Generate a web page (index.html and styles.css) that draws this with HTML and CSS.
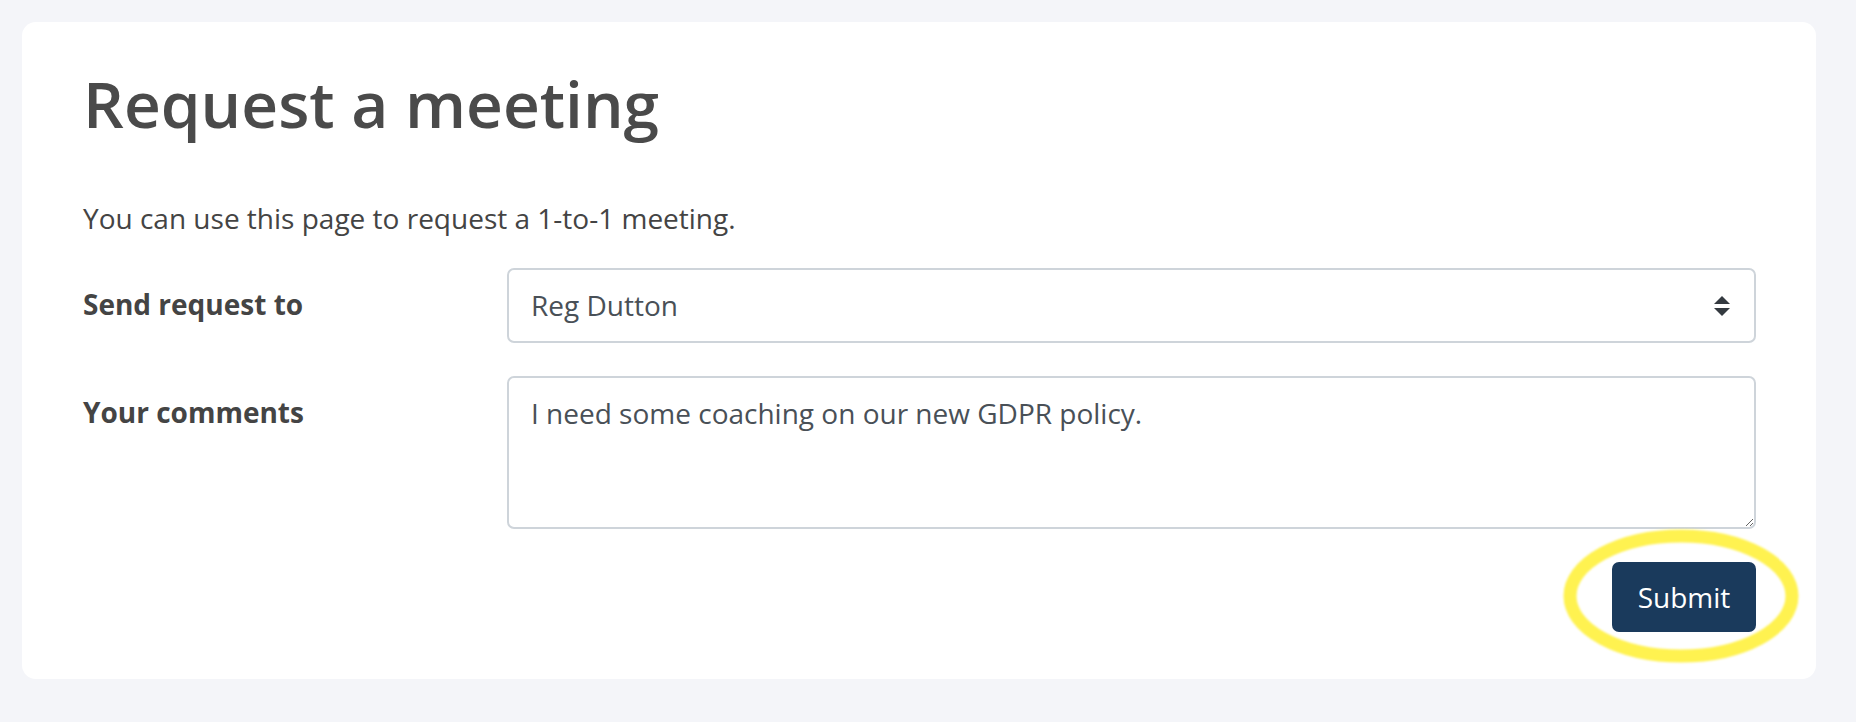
FILE: index.html
```html
<!DOCTYPE html>
<html lang="en">
<head>
  <meta charset="UTF-8">
  <meta name="viewport" content="width=device-width, initial-scale=1.0">
  <title>Request a meeting</title>
  <link rel="stylesheet" href="styles.css">
</head>
<body>
  <div class="card">
    <h1>Request a meeting</h1>
    <p class="intro">You can use this page to request a 1-to-1 meeting.</p>

    <form class="meeting-form">
      <div class="form-row">
        <label for="recipient">Send request to</label>
        <div class="select-wrap">
          <select id="recipient" class="field">
            <option>Reg Dutton</option>
          </select>
          <!-- up/down arrows of the select -->
          <svg class="select-arrows" width="16" height="20" viewBox="0 0 4 5">
            <path d="M2 0L0 2h4zm0 5L0 3h4z" fill="#343a40"/>
          </svg>
        </div>
      </div>

      <div class="form-row">
        <label for="comments">Your comments</label>
        <textarea id="comments" class="field" rows="3">I need some coaching on our new GDPR policy.</textarea>
      </div>

      <div class="btn-container">
        <button type="button" class="btn">Submit</button>
        <!-- highlight ring drawn over the button -->
        <svg class="highlight" width="250" height="146" viewBox="0 0 250 146">
          <ellipse cx="125" cy="72" rx="111" ry="60" fill="none" stroke="#fff250" stroke-width="13"/>
        </svg>
      </div>
    </form>
  </div>
</body>
</html>
```

FILE: styles.css
```css
body {
    font-family: "Open Sans", "Liberation Sans", sans-serif;
    margin: 0;
    padding: 22px 40px 43px 22px;
    background-color: #f4f5f9;
    color: #444;
}

.card {
    background: #fff;
    border-radius: 14px;
    padding: 44px 60px 47px 61px;
}

h1 {
    font-size: 64px;
    font-weight: 600;
    line-height: 1.2;
    color: #4a4a4a;
    margin: 0;
}

.intro {
    font-size: 28px;
    margin: 56px 0 31px;
}

/* 폼 */
.form-row {
    display: grid;
    grid-template-columns: 424px 1fr;
    margin-bottom: 33px;
}

.form-row label {
    font-size: 28px;
    font-weight: 700;
    padding-top: 17px;
}

.field {
    font-family: inherit;
    font-size: 28px;
    color: #495057;
    border: 2px solid #ced4da;
    border-radius: 7px;
    background: #fff;
    padding: 16px 22px;
    width: 100%;
    box-sizing: border-box;
}

select.field {
    height: 75px;
    padding-top: 0;
    padding-bottom: 0;
    appearance: none;
    -webkit-appearance: none;
}

textarea.field {
    display: block;
    height: 153px;
    resize: vertical;
}

.select-wrap {
    position: relative;
}

.select-arrows {
    position: absolute;
    right: 26px;
    top: 28px;
    pointer-events: none;
}

.btn-container {
    position: relative;
    display: flex;
    justify-content: flex-end;
}

.btn {
    font-family: inherit;
    font-size: 28px;
    width: 144px;
    height: 70px;
    background-color: #1a3a5c;
    color: #fff;
    border: none;
    border-radius: 7px;
    cursor: pointer;
}

.highlight {
    position: absolute;
    right: -50px;
    top: -38px;
    pointer-events: none;
    filter: blur(1px);
}
```
